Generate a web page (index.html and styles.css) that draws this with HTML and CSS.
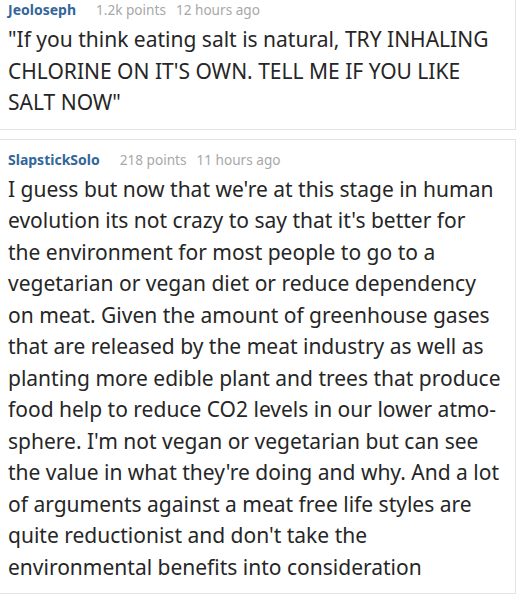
FILE: index.html
```html
<!DOCTYPE html>
<html>
<head>
<meta charset="utf-8">
<link rel="stylesheet" href="styles.css">
</head>
<body>
<div class="thread">
  <div class="comment first">
    <div class="meta">
      <span class="user">Jeoloseph</span>
      <span class="info">1.2k points</span>
      <span class="info">12 hours ago</span>
    </div>
    <p class="body">"If you think eating salt is natural, TRY INHALING CHLORINE ON IT'S OWN. TELL ME IF YOU LIKE SALT NOW"</p>
  </div>
  <div class="comment">
    <div class="meta">
      <span class="user">SlapstickSolo</span>
      <span class="info">218 points</span>
      <span class="info">11 hours ago</span>
    </div>
    <p class="body">I guess but now that we're at this stage in human evolution its not crazy to say that it's better for the environment for most people to go to a vegetarian or vegan diet or reduce dependency on meat. Given the amount of greenhouse gases that are released by the meat industry as well as planting more edible plant and trees that produce food help to reduce CO2 levels in our lower atmo&shy;sphere. I'm not vegan or vegetarian but can see the value in what they're doing and why. And a lot of arguments against a meat free life styles are quite reductionist and don't take the environmental benefits into consideration</p>
  </div>
</div>
</body>
</html>
```

FILE: styles.css
```css
html, body {
  margin: 0;
  padding: 0;
  background: #ffffff;
}

.thread {
  display: flex;
  flex-direction: column;
  gap: 9px;
  width: 516px;
  font-family: "Noto Sans", "Open Sans", sans-serif;
}

.comment {
  border: 1px solid #e3e3e3;
  border-left: none;
  padding: 10px 12px 10px 8px;
  background: #fff;
}

.comment.first {
  border-top: none;
  padding-top: 0;
}

.meta {
  display: flex;
  gap: 10px;
  align-items: baseline;
  height: 20px;
  line-height: 20px;
  font-size: 13.6px;
}

.user {
  color: #336699;
  font-weight: 700;
  font-size: 14px;
  margin-right: 10px;
}

.info {
  color: #a8a8a8;
}

.body {
  margin: 4px 0 0 0;
  font-size: 21px;
  line-height: 31.5px;
  color: #262626;
  hyphens: manual;
}
```
